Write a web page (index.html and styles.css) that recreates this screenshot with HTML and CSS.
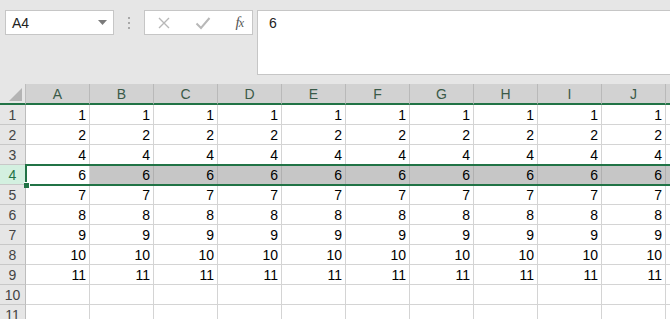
FILE: index.html
```html
<!DOCTYPE html>
<html>
<head>
<meta charset="utf-8">
<link rel="stylesheet" href="styles.css">
</head>
<body>
<div class="app">
  <div class="toolbar">
    <div class="namebox">
      <span class="name">A4</span>
      <svg class="caret" width="9" height="5" viewBox="0 0 9 5"><path d="M0 0h9L4.5 5z" fill="#7a7a7a"/></svg>
    </div>
    <div class="dots"><span></span><span></span><span></span></div>
    <div class="fxbox">
      <svg class="ico" width="14" height="14" viewBox="0 0 14 14"><path d="M2 2L12 12M12 2L2 12" stroke="#b8b8b8" stroke-width="1.4" fill="none"/></svg>
      <svg class="ico" width="16" height="14" viewBox="0 0 16 14"><path d="M1.5 7.5L6 12L14.5 2" stroke="#b8b8b8" stroke-width="2" fill="none"/></svg>
      <span class="fx">f<i>x</i></span>
    </div>
    <div class="formula">6</div>
  </div>
  <div class="sheet">
    <div class="c corner"><span class="tri"></span></div>
    <div class="c ch">A</div><div class="c ch">B</div><div class="c ch">C</div><div class="c ch">D</div><div class="c ch">E</div><div class="c ch">F</div><div class="c ch">G</div><div class="c ch">H</div><div class="c ch">I</div><div class="c ch">J</div><div class="c ch"></div>

    <div class="c rh">1</div><div class="c">1</div><div class="c">1</div><div class="c">1</div><div class="c">1</div><div class="c">1</div><div class="c">1</div><div class="c">1</div><div class="c">1</div><div class="c">1</div><div class="c">1</div><div class="c"></div>
    <div class="c rh">2</div><div class="c">2</div><div class="c">2</div><div class="c">2</div><div class="c">2</div><div class="c">2</div><div class="c">2</div><div class="c">2</div><div class="c">2</div><div class="c">2</div><div class="c">2</div><div class="c"></div>
    <div class="c rh">3</div><div class="c">4</div><div class="c">4</div><div class="c">4</div><div class="c">4</div><div class="c">4</div><div class="c">4</div><div class="c">4</div><div class="c">4</div><div class="c">4</div><div class="c">4</div><div class="c"></div>
    <div class="c rh rsel">4</div><div class="c active">6</div><div class="c hl">6</div><div class="c hl">6</div><div class="c hl">6</div><div class="c hl">6</div><div class="c hl">6</div><div class="c hl">6</div><div class="c hl">6</div><div class="c hl">6</div><div class="c hl">6</div><div class="c hl"></div>
    <div class="c rh">5</div><div class="c">7</div><div class="c">7</div><div class="c">7</div><div class="c">7</div><div class="c">7</div><div class="c">7</div><div class="c">7</div><div class="c">7</div><div class="c">7</div><div class="c">7</div><div class="c"></div>
    <div class="c rh">6</div><div class="c">8</div><div class="c">8</div><div class="c">8</div><div class="c">8</div><div class="c">8</div><div class="c">8</div><div class="c">8</div><div class="c">8</div><div class="c">8</div><div class="c">8</div><div class="c"></div>
    <div class="c rh">7</div><div class="c">9</div><div class="c">9</div><div class="c">9</div><div class="c">9</div><div class="c">9</div><div class="c">9</div><div class="c">9</div><div class="c">9</div><div class="c">9</div><div class="c">9</div><div class="c"></div>
    <div class="c rh">8</div><div class="c">10</div><div class="c">10</div><div class="c">10</div><div class="c">10</div><div class="c">10</div><div class="c">10</div><div class="c">10</div><div class="c">10</div><div class="c">10</div><div class="c">10</div><div class="c"></div>
    <div class="c rh">9</div><div class="c">11</div><div class="c">11</div><div class="c">11</div><div class="c">11</div><div class="c">11</div><div class="c">11</div><div class="c">11</div><div class="c">11</div><div class="c">11</div><div class="c">11</div><div class="c"></div>
    <div class="c rh">10</div><div class="c"></div><div class="c"></div><div class="c"></div><div class="c"></div><div class="c"></div><div class="c"></div><div class="c"></div><div class="c"></div><div class="c"></div><div class="c"></div><div class="c"></div>
    <div class="c rh">11</div><div class="c"></div><div class="c"></div><div class="c"></div><div class="c"></div><div class="c"></div><div class="c"></div><div class="c"></div><div class="c"></div><div class="c"></div><div class="c"></div><div class="c"></div>

    <div class="sel"></div>
    <div class="handle"></div>
  </div>
</div>
</body>
</html>
```

FILE: styles.css
```css
html, body {
  margin: 0;
  padding: 0;
}
body {
  width: 670px;
  height: 319px;
  overflow: hidden;
  background: #e6e6e6;
  font-family: "Liberation Sans", Arial, sans-serif;
  color: #000;
}
.app {
  width: 670px;
  height: 319px;
  overflow: hidden;
}
.toolbar {
  height: 84px;
  box-sizing: border-box;
  padding-top: 10px;
  display: flex;
  align-items: flex-start;
}
.namebox {
  margin-left: 5px;
  width: 109px;
  height: 25px;
  box-sizing: border-box;
  background: #fff;
  border: 1px solid #c6c6c6;
  display: flex;
  align-items: center;
  justify-content: space-between;
  padding: 0 6px 0 6px;
  font-size: 14px;
  color: #222;
}
.caret {
  display: block;
}
.dots {
  width: 30px;
  height: 25px;
  display: flex;
  flex-direction: column;
  align-items: center;
  justify-content: center;
  gap: 3px;
}
.dots span {
  width: 2px;
  height: 2px;
  background: #a8a8a8;
}
.fxbox {
  width: 109px;
  height: 25px;
  box-sizing: border-box;
  background: #fff;
  border: 1px solid #c6c6c6;
  display: flex;
  align-items: center;
  justify-content: space-between;
  padding: 0 9px 0 12px;
}
.ico {
  display: block;
}
.fx {
  font-family: "Liberation Serif", serif;
  font-style: italic;
  font-size: 15px;
  color: #555;
  letter-spacing: -1px;
}
.fx i {
  font-size: 12px;
}
.formula {
  margin-left: 4px;
  flex: 1;
  height: 65px;
  box-sizing: border-box;
  background: #fff;
  border: 1px solid #c6c6c6;
  border-right: none;
  padding: 4px 0 0 11px;
  font-size: 14px;
  color: #222;
}
.sheet {
  position: relative;
  display: grid;
  grid-template-columns: 26px repeat(11, 64px);
  grid-template-rows: 21px;
  grid-auto-rows: 20px;
  background: #fff;
}
.c {
  box-sizing: border-box;
  border-right: 1px solid #d4d4d4;
  border-bottom: 1px solid #d4d4d4;
  text-align: right;
  padding-right: 3px;
  font-size: 14px;
  line-height: 21px;
  white-space: nowrap;
  overflow: hidden;
}
.corner {
  position: relative;
  background: #e6e6e6;
  border-right: 1px solid #bdbdbd;
  border-bottom: 2px solid #217346;
}
.tri {
  position: absolute;
  right: 3px;
  bottom: 2px;
  width: 0;
  height: 0;
  border-left: 13px solid transparent;
  border-bottom: 13px solid #b4b4b4;
}
.ch {
  background: #d2d2d2;
  border-right: 1px solid #b9b9b9;
  border-bottom: 2px solid #217346;
  text-align: center;
  padding-right: 0;
  color: #3a5a48;
  line-height: 21px;
}
.rh {
  background: #e6e6e6;
  border-right: 1px solid #bdbdbd;
  border-bottom: 1px solid #c8c8c8;
  text-align: center;
  padding-right: 0;
  color: #444;
}
.rsel {
  background: #d3f0e0;
  color: #217346;
}
.active {
  background: #fff;
}
.hl {
  background: #c6c6c6;
  border-right-color: #b0b0b0;
}
.sel {
  position: absolute;
  left: 25px;
  top: 80px;
  width: 660px;
  height: 22px;
  box-sizing: border-box;
  border: 2px solid #217346;
  pointer-events: none;
}
.handle {
  position: absolute;
  left: 24px;
  top: 98px;
  width: 5px;
  height: 5px;
  background: #217346;
  border: 1px solid #fff;
  border-left: none;
  border-bottom: none;
}
```
